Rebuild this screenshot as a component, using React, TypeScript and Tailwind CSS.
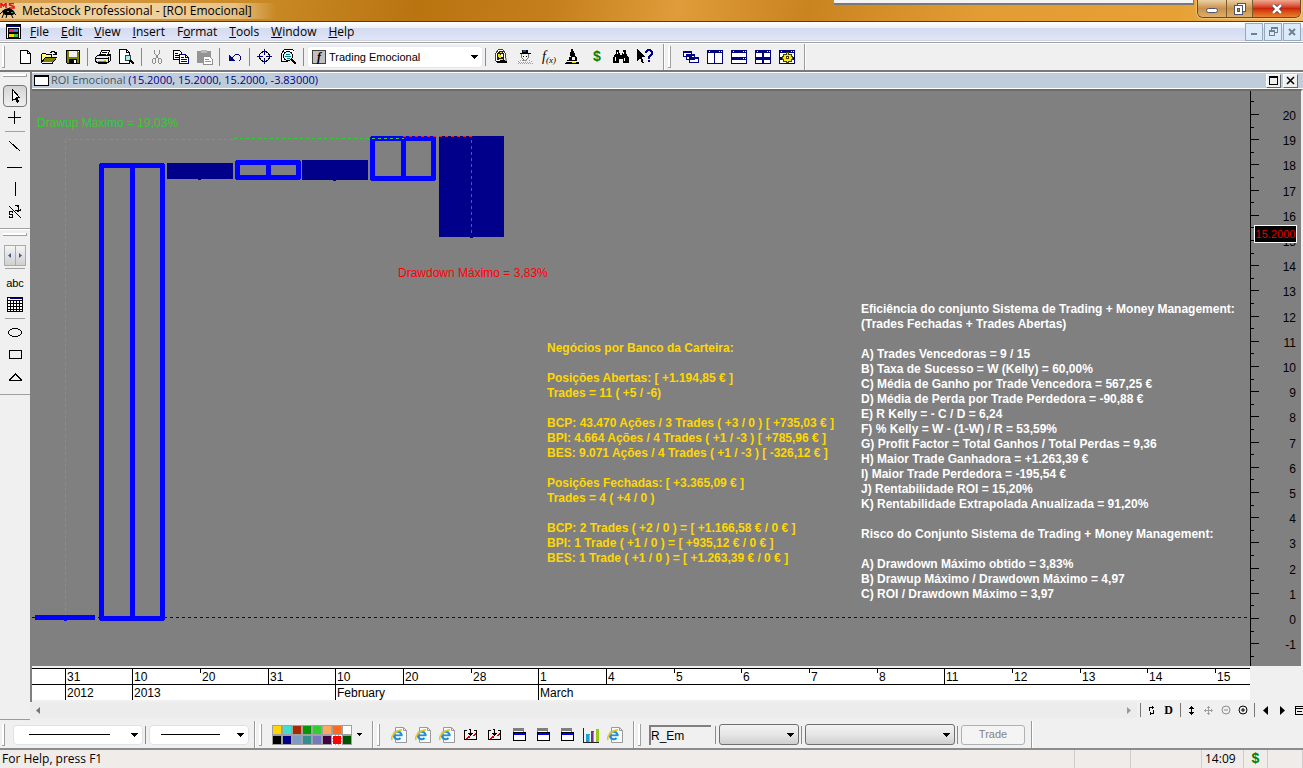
import type { ReactNode } from 'react';
import clsx from 'clsx';

/* ---------- data ---------- */

const menus = ['File', 'Edit', 'View', 'Insert', 'Format', 'Tools', 'Window', 'Help'];
const accessKey: Record<string, number> = { Format: 1 };

const dates = [
  { x: 33, label: '31', full: true },
  { x: 100, label: '10', full: true },
  { x: 168, label: '20' },
  { x: 236, label: '31', full: true },
  { x: 303, label: '10', full: true },
  { x: 371, label: '20', full: true },
  { x: 439, label: '28' },
  { x: 506, label: '1', full: true },
  { x: 574, label: '4', full: true },
  { x: 642, label: '5' },
  { x: 709, label: '6' },
  { x: 777, label: '7' },
  { x: 845, label: '8' },
  { x: 912, label: '11', full: true },
  { x: 980, label: '12' },
  { x: 1048, label: '13' },
  { x: 1115, label: '14' },
  { x: 1183, label: '15' },
];

const months = [
  { x: 33, label: '2012', full: true },
  { x: 100, label: '2013', full: true },
  { x: 303, label: 'February', full: true },
  { x: 506, label: 'March', full: true },
];

const candles = [
  { x: 135, top: 72, bottom: 88, up: false },
  { x: 270, top: 69, bottom: 89, up: false },
  { x: 407, top: 45, bottom: 146, up: false },
  { x: 67, top: 72, bottom: 530, up: true },
  { x: 203, top: 69, bottom: 89, up: true },
  { x: 338, top: 45, bottom: 90, up: true },
];

const bankLines = [
  'Negócios por Banco da Carteira:',
  '',
  'Posições Abertas: [ +1.194,85 € ]',
  'Trades = 11 ( +5 / -6)',
  '',
  'BCP: 43.470 Ações / 3 Trades ( +3 / 0 ) [ +735,03 € ]',
  'BPI: 4.664 Ações / 4 Trades ( +1 / -3 ) [ +785,96 € ]',
  'BES: 9.071 Ações / 4 Trades ( +1 / -3 ) [ -326,12 € ]',
  '',
  'Posições Fechadas: [ +3.365,09 € ]',
  'Trades = 4 ( +4 / 0 )',
  '',
  'BCP: 2 Trades ( +2 / 0 ) = [ +1.166,58 € / 0 € ]',
  'BPI: 1 Trade ( +1 / 0 ) = [ +935,12 € / 0 € ]',
  'BES: 1 Trade ( +1 / 0 ) = [ +1.263,39 € / 0 € ]',
];

const systemLines = [
  'Eficiência do conjunto Sistema de Trading + Money Management:',
  '(Trades Fechadas + Trades Abertas)',
  '',
  'A) Trades Vencedoras = 9 / 15',
  'B) Taxa de Sucesso = W (Kelly) = 60,00%',
  'C) Média de Ganho por Trade Vencedora = 567,25 €',
  'D) Média de Perda por Trade Perdedora = -90,88 €',
  'E) R Kelly = - C / D = 6,24',
  'F) % Kelly = W - (1-W) / R = 53,59%',
  'G) Profit Factor = Total Ganhos / Total Perdas = 9,36',
  'H) Maior Trade Ganhadora = +1.263,39 €',
  'I) Maior Trade Perdedora = -195,54 €',
  'J) Rentabilidade ROI = 15,20%',
  'K) Rentabilidade Extrapolada Anualizada = 91,20%',
  '',
  'Risco do Conjunto Sistema de Trading + Money Management:',
  '',
  'A) Drawdown Máximo obtido = 3,83%',
  'B) Drawup Máximo / Drawdown Máximo = 4,97',
  'C) ROI / Drawdown Máximo = 3,97',
];

const palette = [
  '#ffd700', '#40e0d0', '#a52a00', '#009900', '#32cd32', '#ffa860', '#ff6a20', '#ffffff',
  '#000000', '#00008b', '#7b9cc4', '#338f8f', '#7878c0', '#440044', '#ff0000', '#005500',
];

/* ---------- small pieces ---------- */

function Icon({ children, size = 16 }: { children: ReactNode; size?: number }) {
  return (
    <svg width={size} height={size} viewBox={`0 0 ${size} ${size}`} fill="none" shapeRendering="crispEdges" aria-hidden="true">
      {children}
    </svg>
  );
}

function Tool({ label, children }: { label: string; children: ReactNode }) {
  return (
    <button type="button" aria-label={label} className="flex h-[22px] w-6 shrink-0 items-center justify-center">
      {children}
    </button>
  );
}

function Sep() {
  return <span className="mr-[3px] ml-0.5 h-[18px] w-px shrink-0 bg-[#8a8a8a]" />;
}

function BandEnd() {
  return <span className="h-full w-0.5 shrink-0 border-r border-white bg-[#9a9a9a]" />;
}

function Grip() {
  return <span className="h-[22px] w-[3px] shrink-0 border-r border-b border-[#a0a0a0] bg-white" />;
}

function Arrow({ className }: { className?: string }) {
  return (
    <svg width="7" height="4" viewBox="0 0 7 4" className={clsx('pointer-events-none', className)} shapeRendering="crispEdges">
      <path d="M0 0h7v1h-1v1h-1v1h-1v1h-1v-1h-1v-1h-1v-1h-1z" fill="#000" />
    </svg>
  );
}

/* ---------- icons ---------- */

const NewIcon = () => (
  <Icon>
    <path d="M3.500 1.500h7l3 3v10h-10z" fill="#fff" stroke="#000" />
    <path d="M10.500 1.500v3h3" stroke="#000" />
  </Icon>
);

const OpenIcon = () => (
  <Icon>
    <path d="M0 5h5v1h6v3H4l-4 5z" fill="#ffff80" />
    <path d="M.5 14V5.500l1-1h3l1 1h5v3M.5 13.500L4.500 8.500h11l-4 5.500H.5" stroke="#000" />
    <path d="M4 9h11l-3 4H2z" fill="#808000" />
    <path d="M9 3.500h1v-1h3v1h1v1m1-2v2.500h-3" stroke="#000" />
  </Icon>
);

const SaveIcon = () => (
  <Icon>
    <path d="M1.500 1.500h13v13h-12l-1-1z" fill="#808000" stroke="#000" />
    <path d="M4 2h8v6H4z" fill="#f0f0f0" />
    <path d="M4 10h8v4H4z" fill="#000" />
    <path d="M9 11h2v3H9z" fill="#fff" />
    <path d="M13 2h1v1h-1z" fill="#fff" />
  </Icon>
);

const PrintIcon = () => (
  <Icon>
    <path d="M4.500 7L6.500 1.500h8l-2 5.500" fill="#fff" stroke="#000" />
    <path d="M7 3.500h5M6 5.500h5" stroke="#000" />
    <path d="M.5 8.500l2-2h11l2-1v6l-2 2h-11l-2-1z" fill="#e8e8e8" stroke="#000" />
    <path d="M1 9.500h12M13.500 8v6M3 14.500h9" stroke="#000" />
    <path d="M3 12h8v1H3z" fill="#808080" />
    <path d="M9 11h2v1H9z" fill="#e0e000" />
  </Icon>
);

const PreviewIcon = () => (
  <Icon>
    <path d="M.5.500h7l3 3v11H.5z" fill="#fff" stroke="#000" />
    <path d="M7.500.500v3h3" stroke="#000" />
    <circle cx="9" cy="9" r="3" fill="#a0f0f8" stroke="#404040" />
    <path d="M11 11l4 4" stroke="#000" strokeWidth="2" />
  </Icon>
);

const CutIcon = () => (
  <Icon>
    <path d="M5.500 1v3l4 6M10.500 1v3l-4 6" stroke="#8c8c8c" />
    <ellipse cx="5" cy="12" rx="1.500" ry="2.500" stroke="#8c8c8c" />
    <ellipse cx="11" cy="12" rx="1.500" ry="2.500" stroke="#8c8c8c" />
  </Icon>
);

const CopyIcon = () => (
  <Icon>
    <path d="M.5 1.500h6l2 2v7h-8z" fill="#fff" stroke="#000" />
    <path d="M2 4.500h3M2 6.500h4M2 8.500h4" stroke="#000" />
    <path d="M6.500 5.500h6l3 3v6h-9z" fill="#fff" stroke="#000080" />
    <path d="M8 8.500h3M8 10.500h6M8 12.500h6M12.500 5.500v3h3" stroke="#000080" />
  </Icon>
);

const PasteIcon = () => (
  <Icon>
    <path d="M0 2h14v12H0z" fill="#949494" />
    <path d="M4 1h6v3H4z" fill="#b8b8b8" />
    <path d="M6.500 7.500h6l3 3v5h-9z" fill="#fff" stroke="#909090" />
    <path d="M8 10.500h4M8 12.500h6" stroke="#909090" />
  </Icon>
);

const UndoIcon = () => (
  <Icon>
    <path d="M2 6v6h6z" fill="#000080" />
    <path d="M4.500 9.500l2-2 2-2h3l2 2v3l-2 2" stroke="#000080" />
  </Icon>
);

const TargetIcon = () => (
  <Icon>
    <circle cx="7.500" cy="7.500" r="5" stroke="#000" />
    <path d="M7.500 0v6M7.500 9v6M0 7.500h6M9 7.500h6" stroke="#000080" />
  </Icon>
);

const ExploreIcon = () => (
  <Icon>
    <path d="M.5 11.500V4.500l3-4h8l2 2" fill="#fff" stroke="#000" />
    <circle cx="7" cy="7" r="4.500" fill="#d8f8f8" stroke="#000" />
    <path d="M4 7.500h6M5 5.500h4M6 9.500h3" stroke="#008080" />
    <path d="M10 10l5 5" stroke="#000" strokeWidth="2" />
    <path d="M0 12.500h7" stroke="#000" />
  </Icon>
);

const ExpertIcon = () => (
  <Icon>
    <path d="M2.500 4.500l3-4h4l3 4v8l-2 1h-6l-2-2z" fill="#fff" stroke="#404040" />
    <path d="M4 4l2-2h4l1 3v6H4z" fill="#202000" />
    <path d="M5 5h2v1h1v3H6V8H5zM7 3h2v1H7zM6 10h4v1H6z" fill="#f0e000" />
    <path d="M8 5h2v3H8z" fill="#fff" />
    <path d="M2 12h4l1-1h5l2 2v1H4z" fill="#000" />
    <path d="M12 9h2v3h-2z" fill="#a0a0a0" />
  </Icon>
);

const AdvisorIcon = () => (
  <Icon>
    <path d="M3 4h11v1H3zM5 1h6v3H5z" fill="#000" />
    <path d="M6 1h3v2H6z" fill="#2040c0" />
    <path d="M4.500 5v3l2 3h3l2-3V5" stroke="#777" fill="#f4f4f4" />
    <path d="M6 7h1v1H6zM9 7h1v1H9z" fill="#000" />
    <path d="M1 15v-2l4-2h6l4 2v2" stroke="#a0a0a0" strokeDasharray="1 1" />
    <path d="M2 13.500h12M3 14.500h11" stroke="#a0a0a0" strokeDasharray="1 1" />
  </Icon>
);

const MicroscopeIcon = () => (
  <Icon>
    <path d="M6 0h2v2h1v2h1v4H6V7H5V3h1zM4 8h3v4H4zM10 6l2 3v3h-2zM1 13h13v2H0z" fill="#000" />
    <path d="M2 11.500h9" stroke="#000" />
    <path d="M7 13h4v1H7z" fill="#e0e000" />
  </Icon>
);

const BinocularsIcon = () => (
  <Icon>
    <path d="M3 1h3v3h1v2h2V4h1V1h3v3l3 5v5h-6v-4H6v4H0V9l3-5z" fill="#000" />
    <path d="M4.500 3v2M2.500 8v4M10.500 3v2M11.500 9v3" stroke="#fff" />
  </Icon>
);

const HelpPointerIcon = () => (
  <Icon>
    <path d="M0 0v12l3-3 2 5h2L5 8h4z" fill="#000" />
    <path d="M9 4V3l1-1 1-1h2l2 2v2l-3 3v2" stroke="#000080" strokeWidth="2" />
    <path d="M11 11h2v2h-2z" fill="#000080" />
  </Icon>
);

function Frames({ children }: { children?: ReactNode }) {
  return (
    <Icon>
      <path d="M.5 1.500h15v13H.5z" fill="#fff" stroke="#000080" />
      <path d="M0 1h16v3H0z" fill="#000080" />
      <path d="M2 2.500h1M12 2.500h1m1 0h1" stroke="#fff" />
      {children}
    </Icon>
  );
}

const CascadeIcon = () => (
  <Icon>
    <path d="M.5 2.500h8v5h-8zM3.500 5.500h8v5h-8zM6.500 8.500h9v5h-9z" fill="#fff" stroke="#000080" />
    <path d="M0 2h9v2H0zM3 5h9v2H3zM6 8h10v2H6z" fill="#000080" />
  </Icon>
);

const IeIcon = () => (
  <svg width="16" height="16" viewBox="0 0 16 16" fill="none" aria-hidden="true">
    <path d="M4.500.5h8l3 3v12h-11z" fill="#fafafa" stroke="#9a9a9a" />
    <path d="M12.500.5v3h3" stroke="#9a9a9a" />
    <path d="M10.500 8.500a3.800 3.800 0 1 0-1 2.500" stroke="#2490dc" strokeWidth="2.200" />
    <path d="M3.500 8.300h8" stroke="#2490dc" strokeWidth="1.800" />
    <path d="M1 13C-.5 9.500 4 3.500 11 2.800" stroke="#f0c420" strokeWidth="1.600" />
  </svg>
);

const ImportIcon = () => (
  <Icon>
    <path d="M4 3.500H1.500v9h12v-9H11" stroke="#000" />
    <path d="M3 11.500h1v-1h1v-1h1v1h1m3-2h1v-1h1v-1h1" stroke="#d00000" />
    <path d="M7.500 2v7M5 6.500h5M6 7.500h3M6 2.500h2" stroke="#000" />
  </Icon>
);

const WindowIcon = () => (
  <Icon>
    <path d="M2.500 2.500h10v8h-10z" stroke="#808080" fill="#fff" />
    <path d="M2 1h11v3H2z" fill="#808080" />
    <path d="M2.500 5.500h12v8h-12z" fill="#fff" stroke="#000" />
    <path d="M3 6h11v2H3z" fill="#0000ff" />
  </Icon>
);

const BarsIcon = () => (
  <Icon>
    <path d="M.5 1v14.500H16" stroke="#202020" />
    <path d="M3 7h4v8H3z" fill="#1ca0d8" />
    <path d="M8 4h3v11H8z" fill="#703090" />
    <path d="M13 2h3v13h-3z" fill="#98c818" />
    <path d="M6 8h1v7H6zM10 5h1v10h-1z" fill="#fff" opacity=".4" />
  </Icon>
);

/* ---------- bars ---------- */

function TitleBar() {
  return (
    <header className="relative flex h-[22px] shrink-0 items-center border-b border-[#5a3c10] bg-[linear-gradient(100deg,#d9a050_0%,#c98a26_20%,#b97410_32%,#c47f1c_42%,#e09c3a_52%,#c98420_62%,#e29c34_75%,#e6a034_90%,#f0b860_100%)]">
      <div className="flex items-center gap-1.5 bg-[linear-gradient(90deg,#ecc88c,#f0d4a4_50%,#e8c080_85%,#e8c08000)] pr-6">
        <svg width="16" height="16" viewBox="0 0 16 16" fill="none" aria-hidden="true">
          <path d="M1 5V0l2.500 3L6 0v5M14 .5H9.500V2L14 3.500V5H9" stroke="#e01010" strokeWidth="1.500" />
          <path d="M2 8l3-2 4-1 4 2 2 3-2 2H5L3 10z" fill="#000" />
          <path d="M3 8L0 11m4-1l-2 5m5-4l-1 4m5-4l2 4m0-6l3 3" stroke="#000" />
          <path d="M7 8h2v1H7zM11 9h2v1h-2z" fill="#30b0a0" />
        </svg>
        <h1 className="text-xs whitespace-nowrap">MetaStock Professional - [ROI Emocional]</h1>
      </div>
      <div className="absolute top-0 right-[109px] h-[5px] w-[360px] border-r border-b-2 border-[#77797c] bg-[#f4f4f4]" />
      <div className="mr-0.5 ml-auto flex h-[18px] self-start overflow-hidden rounded-b-md border border-t-0 border-[#6b4a20] shadow-[0_0_2px_#fff]">
        <button type="button" aria-label="Minimize" className="flex w-[29px] items-center justify-center border-r border-[#7d5b30] bg-linear-to-b from-[#ecd0a4] via-[#c8914a] to-[#dcae6c]">
          <span className="mt-1 h-[5px] w-3 rounded-sm border border-[#4c5468] bg-white" />
        </button>
        <button type="button" aria-label="Restore" className="flex w-[26px] items-center justify-center border-r border-[#7d5b30] bg-linear-to-b from-[#ecd0a4] via-[#c8914a] to-[#dcae6c]">
          <Icon size={12}>
            <path d="M3.500.5h8v8h-8z" fill="#fff" stroke="#4c5468" />
            <path d="M.5 2.500h8v9h-8z" fill="#fff" stroke="#4c5468" />
            <path d="M3.500 5.500h2v3h-2z" fill="#c8914a" stroke="#4c5468" />
          </Icon>
        </button>
        <button type="button" aria-label="Close" className="flex w-[47px] items-center justify-center bg-linear-to-b from-[#f0a890] via-[#cc2408] to-[#e8802c]">
          <svg width="12" height="10" viewBox="0 0 12 10">
            <path d="M2 1l8 8M10 1L2 9" stroke="#4c3a48" strokeWidth="4" />
            <path d="M2 1l8 8M10 1L2 9" stroke="#fff" strokeWidth="2.500" />
          </svg>
        </button>
      </div>
    </header>
  );
}

function MenuBar() {
  const mdi = 'flex h-[18px] w-[18px] items-center justify-center border border-[#94a8c0] bg-[#dcebf9] text-[#6f8090]';
  return (
    <nav className="flex h-[21px] shrink-0 items-center border-b border-[#a0a0a0] bg-[linear-gradient(#fff,#edf0f8_30%,#d4dbef_31%,#e0e5f8_90%,#b8bfd0_91%,#fff_96%)] pr-0.5 pb-px">
      <div className="mr-2 ml-1.5 flex">
        <Icon>
          <path d="M.5.5h14v14H.5z" fill="#fff" stroke="#000" />
          <path d="M1 1h13v2H1z" fill="#000080" />
          <path d="M3 5h9v3H3z" fill="#f02060" />
          <path d="M8 5h4v3H8z" fill="#2080e0" />
          <path d="M3 10h9v3H3z" fill="#e8e000" />
          <path d="M8 10h4v3H8z" fill="#30c040" />
          <path d="M2.500 4.500h10v4h-10zM2.500 9.500h10v4h-10z" stroke="#000" />
        </Icon>
      </div>
      <ul className="flex gap-3">
        {menus.map((m) => {
          const k = accessKey[m] ?? 0;
          return (
            <li key={m} className="flex">
              <button type="button" className="text-xs">
                {m.slice(0, k)}
                <u>{m[k]}</u>
                {m.slice(k + 1)}
              </button>
            </li>
          );
        })}
      </ul>
      <div className="ml-auto flex gap-px">
        <button type="button" aria-label="Minimize chart" className={mdi}>
          <span className="mt-1 h-0.5 w-1.5 bg-current" />
        </button>
        <button type="button" aria-label="Restore chart" className={mdi}>
          <Icon size={9}>
            <path d="M2.500 3V.5h6v5H6M3 1.500h5M.5 3.500h5v5h-5zM1 4.500h5" stroke="currentColor" />
          </Icon>
        </button>
        <button type="button" aria-label="Close chart" className={mdi}>
          <svg width="8" height="8" viewBox="0 0 8 8">
            <path d="M1 1l6 6M7 1L1 7" stroke="currentColor" strokeWidth="2" />
          </svg>
        </button>
      </div>
    </nav>
  );
}

function MainToolbar() {
  return (
    <div className="flex h-[29px] shrink-0 items-center border-t border-b-2 border-t-white border-b-[#77797a] bg-[#f0f0f0] pl-0.5">
      <Grip />
      <span className="w-2 shrink-0" />
      <Tool label="New"><NewIcon /></Tool>
      <Tool label="Open"><OpenIcon /></Tool>
      <Tool label="Save"><SaveIcon /></Tool>
      <Sep />
      <Tool label="Print"><PrintIcon /></Tool>
      <Tool label="Print preview"><PreviewIcon /></Tool>
      <Sep />
      <Tool label="Cut"><CutIcon /></Tool>
      <Tool label="Copy"><CopyIcon /></Tool>
      <Tool label="Paste"><PasteIcon /></Tool>
      <Sep />
      <Tool label="Undo"><UndoIcon /></Tool>
      <Sep />
      <Tool label="Crosshair"><TargetIcon /></Tool>
      <Tool label="Explorer"><ExploreIcon /></Tool>
      <Sep />
      <label className="relative flex w-[176px] shrink-0 items-center">
        <span className="absolute left-[5px] flex size-3.5 items-center justify-center border border-[#404040] bg-[#c0c0c0] font-['Liberation_Serif',serif] text-xs leading-none font-bold italic">f</span>
        <select aria-label="Indicator" className="h-[22px] w-full appearance-none rounded-sm border border-[#e3e9ef] bg-white pl-[21px] font-['Liberation_Sans',sans-serif] text-[11px]">
          <option>Trading Emocional</option>
        </select>
        <Arrow className="absolute right-[5px]" />
      </label>
      <Sep />
      <Tool label="Expert advisor"><ExpertIcon /></Tool>
      <Tool label="Commentary"><AdvisorIcon /></Tool>
      <Tool label="Indicator builder">
        <span className="font-['Liberation_Serif',serif] text-sm leading-none italic">f<sub className="text-[9px]">(x)</sub></span>
      </Tool>
      <Tool label="System tester"><MicroscopeIcon /></Tool>
      <Tool label="Option scope">
        <span className="font-['Liberation_Mono',monospace] text-sm leading-none font-bold text-[#008000]">$</span>
      </Tool>
      <Tool label="Find"><BinocularsIcon /></Tool>
      <Tool label="Context help"><HelpPointerIcon /></Tool>
      <span className="w-1.5 shrink-0" />
      <BandEnd />
      <span className="w-[3px] shrink-0" />
      <Grip />
      <span className="w-2 shrink-0" />
      <Tool label="Cascade"><CascadeIcon /></Tool>
      <Tool label="Columns"><Frames><path d="M7.500 3v12" stroke="#000080" /></Frames></Tool>
      <Tool label="Rows"><Frames><path d="M0 8h16v3H0z" fill="#000080" /><path d="M12 9.500h1m1 0h1" stroke="#fff" /></Frames></Tool>
      <Tool label="Tile"><Frames><path d="M0 8h16v3H0zM7 3h2v12H7z" fill="#000080" /></Frames></Tool>
      <Tool label="Tile options">
        <Frames>
          <path d="M0 8h16v3H0zM7 3h2v12H7z" fill="#000080" />
          <path d="M7 3h2v2h3v2h1v3h-1v2H9v1H7v-1H4v-2H3V7h1V5h3z" fill="#ffe800" stroke="#404000" />
          <path d="M7 7h2v2H7z" fill="#fff" stroke="#404000" />
        </Frames>
      </Tool>
      <span className="w-[5px] shrink-0" />
      <BandEnd />
    </div>
  );
}

function SideTool({ label, active, children }: { label: string; active?: boolean; children: ReactNode }) {
  return (
    <button
      type="button"
      aria-label={label}
      aria-pressed={active}
      className={clsx('flex h-[22px] w-6 shrink-0 items-center justify-center', active && 'rounded-sm border border-[#777] bg-linear-to-b from-[#d4d4d4] to-[#f0f0f0]')}
    >
      {children}
    </button>
  );
}

function SideRule() {
  return <span className="mt-[2px] mb-[3px] h-px w-5 shrink-0 bg-[#a0a0a0]" />;
}

function SideBar() {
  return (
    <aside className="flex w-[30px] shrink-0 flex-col items-center border-b border-[#9a9a9a] bg-[#f0f0f0]">
      <div className="flex w-full flex-col items-center border-b border-[#a0a0a0] pt-0.5 pb-[5px]">
        <span className="mb-2 h-[3px] w-6 border-r border-b border-[#a0a0a0] bg-white" />
        <SideTool label="Pointer" active>
          <Icon>
            <path d="M5.500 1.500v11l3-2 2 4 1-1-2-4h3z" fill="#fff" stroke="#000" />
          </Icon>
        </SideTool>
        <SideTool label="Crosshair"><Icon><path d="M7.500 1v13M1 7.500h13" stroke="#000" /></Icon></SideTool>
        <SideRule />
        <SideTool label="Trendline"><Icon><path d="M2 3l11 10" stroke="#000" /></Icon></SideTool>
        <SideTool label="Horizontal line"><Icon><path d="M0 7.500h15" stroke="#000" /></Icon></SideTool>
        <SideTool label="Vertical line"><Icon><path d="M8.500 0v14" stroke="#000" /></Icon></SideTool>
        <SideTool label="Speed lines">
          <Icon>
            <path d="M2 2l12 12" stroke="#000" />
            <path d="M8 1.500h4M10 2h1v5h-1M8 6.500h5.500v-2" stroke="#000" />
            <path d="M6 7.500H2.500v3h3v3H2M5.500 7v2M2.500 12v2" stroke="#000" />
          </Icon>
        </SideTool>
      </div>
      <div className="flex w-full flex-col items-center border-t border-b border-t-white border-b-[#a0a0a0] pt-[3px] pb-1.5">
        <span className="mb-[9px] h-[3px] w-6 border-r border-b border-[#a0a0a0] bg-white" />
        <div className="flex h-[21px] w-[22px] border border-[#a8abb0] bg-linear-to-b from-[#f4f4f4] to-[#d0d0d0]">
          <button type="button" aria-label="Previous" className="flex flex-1 items-center justify-center border-r border-[#a8abb0]">
            <svg width="3" height="5" viewBox="0 0 3 5"><path d="M3 0v5L0 2.500z" fill="#3c5a9c" /></svg>
          </button>
          <button type="button" aria-label="Next" className="flex flex-1 items-center justify-center">
            <svg width="3" height="5" viewBox="0 0 3 5"><path d="M0 0v5l3-2.500z" fill="#3c5a9c" /></svg>
          </button>
        </div>
        <SideRule />
        <SideTool label="Text">
          <span className="font-['Liberation_Sans',sans-serif] text-[11px]">abc</span>
        </SideTool>
        <SideTool label="Grid">
          <Icon>
            <path d="M.5.5h15v14H.5z" fill="#fff" stroke="#000" />
            <path d="M1 3.500h14M1 6.500h14M1 9.500h14M1 12.500h14M3.500 3v12M6.500 3v12M9.500 3v12M12.500 3v12" stroke="#000" />
            <path d="M3 1h12v1H3z" fill="#000080" />
          </Icon>
        </SideTool>
        <SideRule />
        <SideTool label="Ellipse"><Icon><ellipse cx="8" cy="7.500" rx="6.500" ry="4" stroke="#000" /></Icon></SideTool>
        <SideTool label="Rectangle"><Icon><path d="M2.500 3.500h12v8h-12z" stroke="#000" /></Icon></SideTool>
        <SideTool label="Triangle"><Icon><path d="M2 11.500h13M2.500 11l6-6 6 6" stroke="#000" /></Icon></SideTool>
      </div>
    </aside>
  );
}

/* ---------- chart ---------- */

function Plot() {
  return (
    <svg className="absolute inset-0 size-full" shapeRendering="crispEdges" fill="none" role="img" aria-label="ROI Emocional">
      <line x1="0" y1="526.5" x2="100%" y2="526.5" stroke="#0000a0" strokeDasharray="3 3" />
      <path d="M33.500 526V48.500H202" stroke="#32cd32" strokeDasharray="3 3" />
      <path d="M3 524h60v5H3zM32 529h3v1h-3z" fill="#0000ff" />
      {candles.map((c) =>
        c.up ? (
          <g key={c.x} stroke="#0000ff" strokeWidth="5">
            <rect x={c.x + 2.5} y={c.top + 2.5} width="61" height={c.bottom - c.top - 5} strokeLinejoin="round" />
            <path d={`M${c.x + 33.5} ${c.top}V${c.bottom}`} />
          </g>
        ) : (
          <g key={c.x} fill="#00008b">
            <rect x={c.x} y={c.top} width={c.x === 407 ? 65 : 66} height={c.bottom - c.top} />
            <rect x={c.x + 31} y={c.bottom} width="3" height="1" />
          </g>
        ),
      )}
      <path d="M202 47.500H372" stroke="#32cd32" strokeDasharray="3 3" />
      <path d="M371 45.500h68.500V145" stroke="#ff1a1a" strokeDasharray="3 3" />
    </svg>
  );
}

function Note({ lines, className }: { lines: string[]; className: string }) {
  return (
    <div className={clsx('absolute text-xs leading-[15px] whitespace-nowrap', className)}>
      {lines.map((line, i) => (
        <p key={i} className="min-h-[15px]">{line}</p>
      ))}
    </div>
  );
}

function PriceAxis() {
  const levels = Array.from({ length: 45 }, (_, i) => 20.5 - i / 2);
  return (
    <div className="relative w-[51px] shrink-0">
      <svg className="absolute inset-0 size-full" shapeRendering="crispEdges">
        <line x1=".5" y1="0" x2=".5" y2="100%" stroke="#000" />
        {levels.map((v) => {
          const y = Math.round(527 - v * 25.2);
          const major = Number.isInteger(v);
          return (
            <g key={v}>
              <rect x="1" y={y} width={major ? 8 : 3} height="1" />
              {major && <text x="46" y={y + 6} textAnchor="end" fontSize="12">{v}</text>}
            </g>
          );
        })}
      </svg>
      <output className="absolute top-[134px] right-1 flex h-[18px] w-[43px] items-center justify-center border border-white bg-black text-[11px] text-[#e00000]">15.2000</output>
    </div>
  );
}

function DateRow({ cells }: { cells: { x: number; label: string; full?: boolean }[] }) {
  return (
    <div className="flex h-4 items-stretch border-t border-black" style={{ paddingLeft: cells[0].x }}>
      {cells.map((c, i) => {
        const next = cells[i + 1];
        return (
          <span
            key={c.x}
            className={clsx('relative text-xs leading-[17px]', next ? 'shrink-0' : 'flex-1')}
            style={next ? { width: next.x - c.x } : undefined}
          >
            <span className={clsx('absolute top-0 left-0 w-px bg-black', c.full ? 'h-full' : 'h-1')} />
            <span className="pl-0.5">{c.label}</span>
          </span>
        );
      })}
    </div>
  );
}

function ChartTool({ label, children }: { label: string; children: ReactNode }) {
  return (
    <button type="button" aria-label={label} className="flex h-4 w-[17px] shrink-0 items-center justify-center">
      {children}
    </button>
  );
}

function ChartSep() {
  return <span className="mr-0.5 ml-[3px] h-3.5 w-px shrink-0 bg-[#777]" />;
}

function ScrollRow() {
  return (
    <div className="flex h-[18px] shrink-0 items-center overflow-hidden bg-[#f0f0f0] pb-0.5">
      <div className="flex h-full flex-1 items-center justify-between bg-[#ececec] px-1.5">
        <button type="button" aria-label="Scroll left">
          <svg width="4" height="7" viewBox="0 0 4 7"><path d="M4 0v7L0 3.500z" fill="#777" /></svg>
        </button>
        <button type="button" aria-label="Scroll right">
          <svg width="4" height="7" viewBox="0 0 4 7"><path d="M0 0v7l4-3.500z" fill="#999" /></svg>
        </button>
      </div>
      <div className="flex w-[166px] shrink-0 items-center overflow-hidden">
        <ChartSep />
        <ChartTool label="Refresh">
          <Icon size={9}><path d="M2.500 5V1.500h4M5.500 0v3M6.500 4v3.500h-4M3.500 6v3" stroke="#000" /></Icon>
        </ChartTool>
        <ChartTool label="Daily"><span className="font-['Liberation_Serif',serif] text-xs leading-none font-bold">D</span></ChartTool>
        <ChartSep />
        <ChartTool label="Rescale">
          <Icon size={9}><path d="M4 0h1v1h1v1h1v1H5v3h2v1H6v1H5v1H4V8H3V7H2V6h2V3H2V2h1V1h1z" fill="#000" /></Icon>
        </ChartTool>
        <ChartTool label="Move">
          <Icon size={9}><path d="M4.500 0v9M0 4.500h9M3 1.500h3M3 7.500h3M1.500 3v3M7.500 3v3" stroke="#a0a0a0" /></Icon>
        </ChartTool>
        <ChartTool label="Zoom out">
          <svg width="10" height="10" viewBox="0 0 10 10" fill="none" stroke="#8c8c8c"><circle cx="5" cy="5" r="4" /><path d="M3 5h4" /></svg>
        </ChartTool>
        <ChartTool label="Zoom in">
          <svg width="10" height="10" viewBox="0 0 10 10" fill="none" stroke="#000"><circle cx="5" cy="5" r="4" /><path d="M3 5h4M5 3v4" /></svg>
        </ChartTool>
        <ChartSep />
        <ChartTool label="Back"><svg width="5" height="9" viewBox="0 0 5 9"><path d="M5 0v9L0 4.500z" /></svg></ChartTool>
        <ChartTool label="Forward"><svg width="5" height="9" viewBox="0 0 5 9"><path d="M0 0v9l5-4.500z" /></svg></ChartTool>
        <ChartTool label="Layouts">
          <Icon size={9}><path d="M.5.5h8v8h-8zM1 2.500h8M2 5.500h5" stroke="#000" /></Icon>
        </ChartTool>
      </div>
    </div>
  );
}

function ChartWindow() {
  const btn = 'flex h-3.5 w-[15px] items-center justify-center border border-white border-r-[#666] border-b-[#666] bg-[#f0f0f0]';
  return (
    <section className="flex min-w-0 flex-1 flex-col">
      <div className="flex flex-1 flex-col border-l-2 border-l-[#808080]">
        <div className="flex h-[17px] shrink-0 items-center border-y border-white bg-[#bfcddb] pr-[5px] pl-0.5">
          <span className="mr-0.5 h-[11px] w-[15px] border border-t-2 border-black bg-white" />
          <h2 className="text-[11px] whitespace-nowrap text-[#00008b]">
            <span className="text-[#4d5358]">ROI Emocional</span> (15.2000, 15.2000, 15.2000, -3.83000)
          </h2>
          <div className="ml-auto flex gap-0.5">
            <button type="button" aria-label="Maximize" className={btn}>
              <Icon size={9}><path d="M.5.5h8v8h-8zM0 1.500h9" stroke="#000" /></Icon>
            </button>
            <button type="button" aria-label="Close" className={btn}>
              <svg width="9" height="9" viewBox="0 0 9 9"><path d="M1 1l7 7M8 1L1 8" stroke="#000" strokeWidth="1.500" /></svg>
            </button>
          </div>
        </div>
        <div className="flex flex-1 border-t-2 border-r-2 border-t-[#6c6c68] border-r-[#f0f0f0] bg-[#808080] font-['Liberation_Sans',sans-serif]">
          <div className="relative flex-1 overflow-hidden">
            <Plot />
            <Note lines={['Drawup Máximo = 19,03%']} className="top-[25px] left-[5px] text-[#32cd32]" />
            <Note lines={['Drawdown Máximo = 3,83%']} className="top-[175px] left-[366px] text-[#ff0000]" />
            <Note lines={bankLines} className="top-[250px] left-[515px] font-bold text-[#ffd700]" />
            <Note lines={systemLines} className="top-[211px] left-[829px] font-bold text-white" />
          </div>
          <PriceAxis />
        </div>
        <div className="mt-0.5 mr-[53px] border-b-2 border-[#f0f0f0] bg-white font-['Liberation_Sans',sans-serif]">
          <DateRow cells={dates} />
          <DateRow cells={months} />
        </div>
      </div>
      <ScrollRow />
    </section>
  );
}

/* ---------- bottom ---------- */

function LineSelect({ label, className, line }: { label: string; className: string; line: string }) {
  return (
    <label className={clsx('relative flex shrink-0 items-center', className)}>
      <select aria-label={label} className="h-5 w-full appearance-none rounded-sm border border-[#dfe3e8] bg-white" />
      <span className={clsx('pointer-events-none absolute h-px bg-black', line)} />
      <Arrow className="absolute right-[5px]" />
    </label>
  );
}

function ButtonSelect({ label, className }: { label: string; className: string }) {
  return (
    <label className={clsx('relative flex shrink-0 items-center', className)}>
      <select aria-label={label} className="h-[21px] w-full appearance-none rounded-[3px] border border-[#707070] bg-linear-to-b from-[#f2f2f2] via-[#e6e6e6] to-[#cfcfcf]" />
      <Arrow className="absolute right-[5px]" />
    </label>
  );
}

function BottomToolbar() {
  return (
    <div className="flex h-[29px] shrink-0 items-center border-b border-[#8c8c8c] bg-[#f0f0f0] pt-px pl-0.5">
      <Grip />
      <span className="w-2 shrink-0" />
      <LineSelect label="Line style" className="w-[130px]" line="left-4 w-[81px]" />
      <Sep />
      <LineSelect label="Line weight" className="w-[100px]" line="left-3 w-[59px]" />
      <span className="w-[5px] shrink-0" />
      <BandEnd />
      <span className="w-[3px] shrink-0" />
      <Grip />
      <div className="ml-2.5 grid shrink-0 grid-cols-8">
        {palette.map((c, i) => (
          <button
            key={c}
            type="button"
            aria-label={`Colour ${i + 1}`}
            className={clsx('size-2.5 border', i === 14 ? 'border-dashed border-white' : 'border-[#a0a0a0]')}
            style={{ backgroundColor: c }}
          />
        ))}
      </div>
      <button type="button" aria-label="More colours" className="ml-[5px] flex w-[15px] shrink-0 items-center">
        <svg width="5" height="3" viewBox="0 0 5 3" shapeRendering="crispEdges"><path d="M0 0h5v1h-1v1h-1v1h-1v-1h-1v-1h-1z" /></svg>
      </button>
      <BandEnd />
      <span className="w-[3px] shrink-0" />
      <Grip />
      <span className="w-[7px] shrink-0" />
      <Tool label="Web page 1"><IeIcon /></Tool>
      <Tool label="Web page 2"><IeIcon /></Tool>
      <Tool label="Web page 3"><IeIcon /></Tool>
      <Tool label="Import prices"><ImportIcon /></Tool>
      <Tool label="Export prices"><ImportIcon /></Tool>
      <Tool label="Layout 1"><WindowIcon /></Tool>
      <Tool label="Layout 2"><WindowIcon /></Tool>
      <Tool label="Layout 3"><WindowIcon /></Tool>
      <Tool label="Statistics"><BarsIcon /></Tool>
      <Tool label="Web page 4"><IeIcon /></Tool>
      <span className="w-1.5 shrink-0" />
      <BandEnd />
      <span className="w-[3px] shrink-0" />
      <Grip />
      <input
        aria-label="Symbol"
        defaultValue="R_Em"
        className="mx-2 h-5 w-[62px] shrink-0 border-t-2 border-l-2 border-[#808080] bg-[#f0f0f0] font-['Liberation_Sans',sans-serif] text-xs"
      />
      <span className="-ml-1 mr-[3px] h-[18px] w-px shrink-0 bg-[#8a8a8a]" />
      <ButtonSelect label="Account" className="w-20" />
      <Sep />
      <ButtonSelect label="Order type" className="w-[150px]" />
      <Sep />
      <button type="button" disabled className="h-5 w-16 shrink-0 rounded-[3px] border border-[#adb2b5] bg-[#f4f4f4] font-['Liberation_Sans',sans-serif] text-[11px] text-[#838383]">
        Trade
      </button>
      <span className="w-1.5 shrink-0" />
      <BandEnd />
    </div>
  );
}

function StatusBar() {
  return (
    <footer className="flex h-[19px] shrink-0 items-center border-t border-[#8c8c8c] bg-[#f0ecea] text-xs">
      <span className="flex-1 pl-0.5">For Help, press F1</span>
      <span className="h-full w-[56px] border-l border-[#d0cccc]" />
      <span className="h-full w-[71px] border-l border-[#d0cccc]" />
      <span className="flex h-full w-[42px] items-center border-l border-[#d0cccc] pl-[3px]">14:09</span>
      <span className="flex h-full w-6 items-center justify-center border-l border-[#d0cccc] font-['Liberation_Mono',monospace] text-sm font-bold text-[#008000]">$</span>
      <span className="h-full w-9 border-x border-[#d0cccc]" />
    </footer>
  );
}

export default function App() {
  return (
    <div className="flex h-screen flex-col overflow-hidden bg-[#f0f0f0] font-['Open_Sans','Noto_Sans',sans-serif] text-black">
      <TitleBar />
      <MenuBar />
      <MainToolbar />
      <main className="flex min-h-0 flex-1">
        <SideBar />
        <ChartWindow />
      </main>
      <BottomToolbar />
      <StatusBar />
    </div>
  );
}
